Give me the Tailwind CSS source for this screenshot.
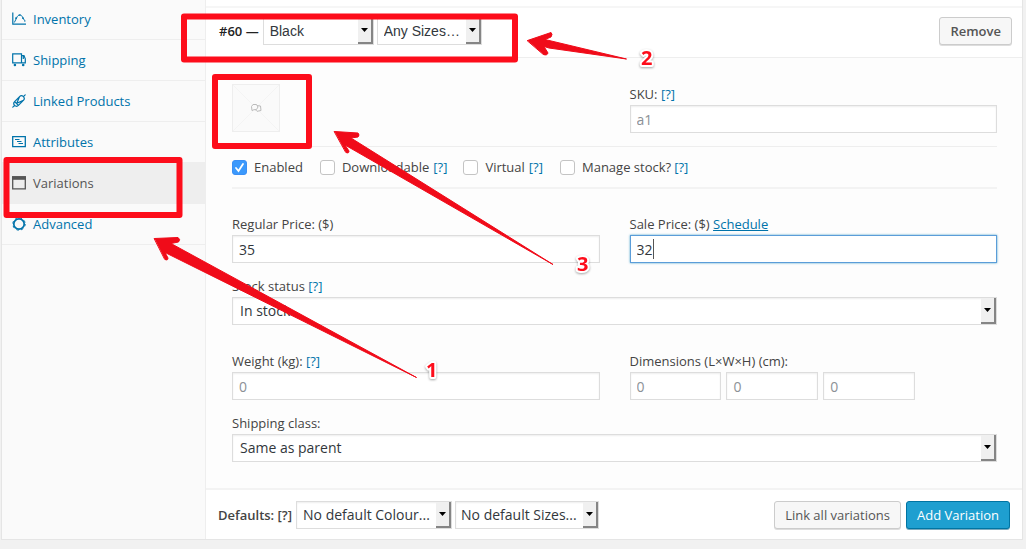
<!DOCTYPE html>
<html lang="en">
<head>
<meta charset="utf-8">
<title>Product data – Variations</title>
<script src="https://cdn.jsdelivr.net/npm/@tailwindcss/browser@4"></script>
</head>
<body class="relative min-h-screen overflow-hidden bg-[#f1f1f1] pl-px pr-[3px] font-['Open_Sans','Noto_Sans',sans-serif] text-[13px] leading-5 text-[#444]">
<div class="flex border-x border-b border-[#e5e5e5] bg-white">

  <nav class="w-[204px] shrink-0 border-r border-[#eee] bg-[#fafafa] text-[#0073aa]" aria-label="Product data">
    <ul>
      <li class="border-b border-[#eee]"><a href="#" class="flex h-[39px] items-center gap-[7px] pb-0.5 pl-2.5">
        <svg class="size-[14px]" viewBox="0 0 14 14" fill="none" stroke="currentColor" stroke-width="1.2"><path d="M.8.5v11.700H14"/><path d="M2.300 10.500 4.600 6C6 2 9.500 2 10.600 5.500l2 3" stroke-width="1"/><path d="M3 6.200h2M6.800 3.200h1.800M10 6.200h2M12 9h1.500"/></svg>
        Inventory</a></li>
      <li class="border-b border-[#eee]"><a href="#" class="flex h-10 items-center gap-[7px] pl-2.5">
        <svg class="size-[14px]" viewBox="0 0 14 14" fill="none" stroke="currentColor" stroke-width="1.200"><path d="M.7.8h8.800v9H.7zM9.500 2.600H12l1.300 3.200v4H9.500M11.300 3v3"/><circle cx="2.900" cy="12" r="1.300" fill="currentColor" stroke="none"/><circle cx="11.200" cy="12" r="1.300" fill="currentColor" stroke="none"/></svg>
        Shipping</a></li>
      <li class="border-b border-[#eee]"><a href="#" class="flex h-10 items-center gap-[7px] pl-2.5">
        <svg class="size-[14px]" viewBox="0 0 14 14" fill="none" stroke="currentColor" stroke-width="1.200" stroke-linecap="round" stroke-linejoin="round"><path d="M.8 13.200 2.600 11.400M11.400 2.600 13.200.8M2.600 11.400C1.200 9.800 1.600 8.600 2.600 7.600L7.600 2.600C8.800 1.400 9.800 1.200 11.400 2.600M2.600 11.400c1.600 1.300 2.800 1 3.800 0l5-5c1.200-1.200 1.400-2.300 0-3.800M2.600 7.600l3.800 3.800M7.600 2.600 4.800 9.200l6.600-2.800"/></svg>
        Linked Products</a></li>
      <li class="border-b border-[#eee]"><a href="#" class="flex h-10 items-center gap-[7px] pl-2.5">
        <svg class="size-[14px]" viewBox="0 0 14 14" fill="none" stroke="currentColor"><path d="M.7 1.700h12.600v10H.7z" stroke-width="1.300"/><path d="M3 4.500h4.500M5 6.500h4.500M6.500 8.500h4.500" stroke-width="1"/></svg>
        Attributes</a></li>
      <li class="border-b border-[#eee] bg-[#eee] text-[#555]"><a href="#" aria-current="page" class="flex h-10 items-center gap-[7px] pl-2.5">
        <svg class="size-[14px]" viewBox="0 0 14 14" fill="none" stroke="currentColor" stroke-width="1.300"><path d="M.7.8h12.600v12H.7z"/><path d="M0 .2h14v3.600H0z" fill="currentColor" stroke="none"/></svg>
        Variations</a></li>
      <li class="border-b border-[#eee]"><a href="#" class="flex h-10 items-center gap-[7px] pl-2.5">
        <svg class="size-[14px]" viewBox="0 0 14 14" fill="none" stroke="currentColor"><circle cx="7" cy="7" r="5.200" stroke-width="1.700"/><circle cx="7" cy="7" r="6.200" stroke-width="1" stroke-dasharray="2.430 2.440"/></svg>
        Advanced</a></li>
    </ul>
  </nav>

  <main class="min-w-0 flex-1">
    <header class="mt-1.5 flex h-[52px] items-center justify-between border-t-2 border-b border-t-[#f6f6f6] border-b-[#eee] pr-2.5 pb-1 pl-[13px]">
      <div class="flex items-center">
        <strong class="mr-1 font-semibold text-[#222]">#60 —</strong>
        <div class="relative mr-[3px]">
          <select aria-label="Colour" class="h-7 w-[111px] appearance-none border border-[#ddd] bg-white pl-1.5 font-['Liberation_Sans',sans-serif] text-[14px] text-[#32373c]"><option>Black</option></select>
          <span class="pointer-events-none absolute inset-y-px right-px flex w-[15px] items-center justify-center border-r-2 border-b-2 border-[#858585] bg-[#f0f0f0]"><svg class="h-1 w-[7px]" viewBox="0 0 7 4"><path d="M0 0h7L3.500 4z"/></svg></span>
        </div>
        <div class="relative">
          <select aria-label="Size" class="h-7 w-[105px] appearance-none border border-[#ddd] bg-white pl-1.5 font-['Liberation_Sans',sans-serif] text-[14px] text-[#32373c]"><option>Any Sizes…</option></select>
          <span class="pointer-events-none absolute inset-y-px right-px flex w-[15px] items-center justify-center border-r-2 border-b-2 border-[#858585] bg-[#f0f0f0]"><svg class="h-1 w-[7px]" viewBox="0 0 7 4"><path d="M0 0h7L3.500 4z"/></svg></span>
        </div>
      </div>
      <button type="button" class="h-7 rounded-[3px] border border-[#ccc] bg-[#f7f7f7] px-2.5 font-semibold text-[#555] shadow-[0_1px_0_#ddd]">Remove</button>
    </header>

    <section class="bg-[#fdfdfd] pt-[26px] pr-[25px] pb-[26px] pl-[26px]">
      <div class="grid grid-cols-2 gap-x-[30px]">
        <button type="button" aria-label="Upload an image" class="size-12 border border-[#eee] bg-[#fafafa]">
          <svg class="size-full" viewBox="0 0 46 46" fill="none" stroke="#f4f4f4"><path d="M0 0 46 46M46 0 0 46"/><g stroke="#bbb" fill="#fafafa"><path d="M23 20.500 27.500 21l.5 4.500-4 .8-2-2z"/><path d="M18.500 21.500 20 19.500h3.500L25 22l-1.500 2.500-3 .3-1.500.8z"/></g></svg>
        </button>
        <div>
          <div class="mb-px"><label for="sku">SKU:</label> <a href="#" class="text-[#0073aa]">[?]</a></div>
          <input id="sku" type="text" placeholder="a1" class="block h-7 w-full border border-[#ddd] bg-white px-1.5 text-[14px] text-[#32373c] shadow-[inset_0_1px_2px_rgba(0,0,0,0.07)] placeholder:text-[#8c9196]">
        </div>
      </div>

      <div class="mt-[13px] flex h-[43px] items-center border-t border-b-2 border-t-[#eee] border-b-[#f3f3f3]">
        <label class="mr-[17px] flex items-center gap-[7px]"><span class="relative size-[15px]"><input type="checkbox" checked class="peer block size-[15px] appearance-none rounded-[3px] border border-[#c4c4c4] bg-white checked:border-[#3b8ff5] checked:bg-[#3b99fc]"><svg class="pointer-events-none absolute inset-0 size-[15px]" viewBox="0 0 15 15" fill="none" stroke="#fff" stroke-width="1.800" stroke-linecap="round"><path d="m4 8 2.500 3L11 4"/></svg></span>Enabled</label>
        <div class="mr-4 flex items-center gap-1"><label class="flex items-center gap-[7px]"><input type="checkbox" class="block size-[15px] appearance-none rounded-[3px] border border-[#c4c4c4] bg-white">Downloadable</label><a href="#" class="text-[#0073aa]">[?]</a></div>
        <div class="mr-[17px] flex items-center gap-1"><label class="flex items-center gap-[7px]"><input type="checkbox" class="block size-[15px] appearance-none rounded-[3px] border border-[#c4c4c4] bg-white">Virtual</label><a href="#" class="text-[#0073aa]">[?]</a></div>
        <div class="flex items-center gap-[3px]"><label class="flex items-center gap-[7px]"><input type="checkbox" class="block size-[15px] appearance-none rounded-[3px] border border-[#c4c4c4] bg-white">Manage stock?</label><a href="#" class="text-[#0073aa]">[?]</a></div>
      </div>

      <div class="mt-[25px] grid grid-cols-2 gap-x-[30px]">
        <div>
          <label for="regular" class="mb-px block">Regular Price: ($)</label>
          <input id="regular" type="text" value="35" class="block h-7 w-full border border-[#ddd] bg-white px-1.5 text-[14px] text-[#32373c] shadow-[inset_0_1px_2px_rgba(0,0,0,0.07)]">
        </div>
        <div>
          <div class="mb-px"><label for="sale">Sale Price: ($)</label> <a href="#" class="text-[#0073aa] underline">Schedule</a></div>
          <div class="relative">
            <input id="sale" type="text" value="32" class="block h-7 w-full border border-[#5b9dd9] bg-white px-1.5 text-[14px] text-[#32373c] shadow-[0_0_2px_rgba(30,140,190,0.8)]">
            <span class="absolute top-1 left-[23px] h-5 w-px bg-[#555]"></span>
          </div>
        </div>
      </div>

      <div class="mt-[13px]">
        <div class="mb-px"><label for="stock">Stock status</label> <a href="#" class="text-[#0073aa]">[?]</a></div>
        <div class="relative">
          <select id="stock" class="block h-7 w-full appearance-none border border-[#ddd] bg-white pl-[7px] text-[14px] text-[#32373c] shadow-[inset_0_1px_2px_rgba(0,0,0,0.07)]"><option>In stock</option></select>
          <span class="pointer-events-none absolute inset-y-px right-px flex w-[15px] items-center justify-center border-r-2 border-b-2 border-[#858585] bg-[#f0f0f0]"><svg class="h-1 w-[7px]" viewBox="0 0 7 4"><path d="M0 0h7L3.500 4z"/></svg></span>
        </div>
      </div>

      <div class="mt-[26px] grid grid-cols-2 gap-x-[30px]">
        <div>
          <div class="mb-px"><label for="weight">Weight (kg):</label> <a href="#" class="text-[#0073aa]">[?]</a></div>
          <input id="weight" type="text" placeholder="0" class="block h-7 w-full border border-[#ddd] bg-white px-1.5 text-[14px] text-[#32373c] shadow-[inset_0_1px_2px_rgba(0,0,0,0.07)] placeholder:text-[#8c9196]">
        </div>
        <div>
          <label for="length" class="mb-px block">Dimensions (L×W×H) (cm):</label>
          <div class="flex gap-[5px]">
            <input id="length" type="text" placeholder="0" aria-label="Length" class="block h-7 w-1/4 border border-[#ddd] bg-white px-1.5 text-[14px] text-[#32373c] shadow-[inset_0_1px_2px_rgba(0,0,0,0.07)] placeholder:text-[#8c9196]">
            <input type="text" placeholder="0" aria-label="Width" class="block h-7 w-1/4 border border-[#ddd] bg-white px-1.5 text-[14px] text-[#32373c] shadow-[inset_0_1px_2px_rgba(0,0,0,0.07)] placeholder:text-[#8c9196]">
            <input type="text" placeholder="0" aria-label="Height" class="block h-7 w-1/4 border border-[#ddd] bg-white px-1.5 text-[14px] text-[#32373c] shadow-[inset_0_1px_2px_rgba(0,0,0,0.07)] placeholder:text-[#8c9196]">
          </div>
        </div>
      </div>

      <div class="mt-[13px]">
        <label for="class" class="mb-px block">Shipping class:</label>
        <div class="relative">
          <select id="class" class="block h-7 w-full appearance-none border border-[#ddd] bg-white pl-[7px] text-[14px] text-[#32373c] shadow-[inset_0_1px_2px_rgba(0,0,0,0.07)]"><option>Same as parent</option></select>
          <span class="pointer-events-none absolute inset-y-px right-px flex w-[15px] items-center justify-center border-r-2 border-b-2 border-[#858585] bg-[#f0f0f0]"><svg class="h-1 w-[7px]" viewBox="0 0 7 4"><path d="M0 0h7L3.500 4z"/></svg></span>
        </div>
      </div>
    </section>

    <footer class="flex h-[51px] items-center justify-between border-t-2 border-[#f3f3f3] px-3">
      <div class="flex items-center">
        <strong class="mr-1 font-semibold">Defaults: <a href="#">[?]</a></strong>
        <div class="relative mr-[3px]">
          <select aria-label="Default colour" class="h-7 w-[156px] appearance-none border border-[#ddd] bg-white pl-1.5 text-[14px] text-[#32373c] shadow-[inset_0_1px_2px_rgba(0,0,0,0.07)]"><option>No default Colour...</option></select>
          <span class="pointer-events-none absolute inset-y-px right-px flex w-[15px] items-center justify-center border-r-2 border-b-2 border-[#858585] bg-[#f0f0f0]"><svg class="h-1 w-[7px]" viewBox="0 0 7 4"><path d="M0 0h7L3.500 4z"/></svg></span>
        </div>
        <div class="relative">
          <select aria-label="Default size" class="h-7 w-[144px] appearance-none border border-[#ddd] bg-white pl-[5px] text-[14px] text-[#32373c] shadow-[inset_0_1px_2px_rgba(0,0,0,0.07)]"><option>No default Sizes...</option></select>
          <span class="pointer-events-none absolute inset-y-px right-px flex w-[15px] items-center justify-center border-r-2 border-b-2 border-[#858585] bg-[#f0f0f0]"><svg class="h-1 w-[7px]" viewBox="0 0 7 4"><path d="M0 0h7L3.500 4z"/></svg></span>
        </div>
      </div>
      <div class="flex gap-[5px]">
        <button type="button" class="h-7 rounded-[3px] border border-[#ccc] bg-[#f7f7f7] px-2.5 text-[#555] shadow-[0_1px_0_#ddd]">Link all variations</button>
        <button type="button" class="h-7 rounded-[3px] border border-[#0074a2] bg-[#1e9fd0] px-2.5 text-white shadow-[0_1px_0_#7aa9bd]">Add Variation</button>
      </div>
    </footer>
  </main>
</div>

<!-- Tutorial annotations: frames, arrows and step numbers -->
<svg class="pointer-events-none absolute top-0 left-0" width="1026" height="549" viewBox="0 0 1026 549">
  <g fill="none" stroke="#fd0d1b" stroke-width="6" stroke-linejoin="round">
    <rect x="184" y="16.500" width="331" height="43"/>
    <rect x="215" y="77" width="94" height="69"/>
    <rect x="6.500" y="160" width="173" height="55"/>
  </g>
  <g fill="#f00b19" stroke="#f00b19" stroke-linejoin="round" stroke-linecap="round">
    <path stroke-width="1" d="M527.500 40.500 551 32.500Q553 34 551 37L545 39.500 626.500 59 549 48 544 46.500 548 53Q547 56 543.500 54.500Z"/>
    <path stroke-width="1" d="M334.500 131.500 358 133Q360 135 358 137L351 138 553 264.500 345 145 349 151Q349 154 346 152.500Z"/>
    <path stroke-width="1" d="M154.500 238.500 178 237.500Q181 239.500 178.500 242L171 243.500 416.500 377.500 165 252.500 168 258Q168 261 165 259.500Z"/>
  </g>
  <g font-family="Open Sans, sans-serif" font-weight="700" font-size="20" fill="#fd0d1b" stroke="#fff" stroke-width="4" stroke-linejoin="round" paint-order="stroke" class="drop-shadow-[0_1px_1px_rgba(0,0,0,0.35)]">
    <text x="426" y="377">1</text>
    <text x="641" y="65">2</text>
    <text x="577" y="271">3</text>
  </g>
</svg>
</body>
</html>
